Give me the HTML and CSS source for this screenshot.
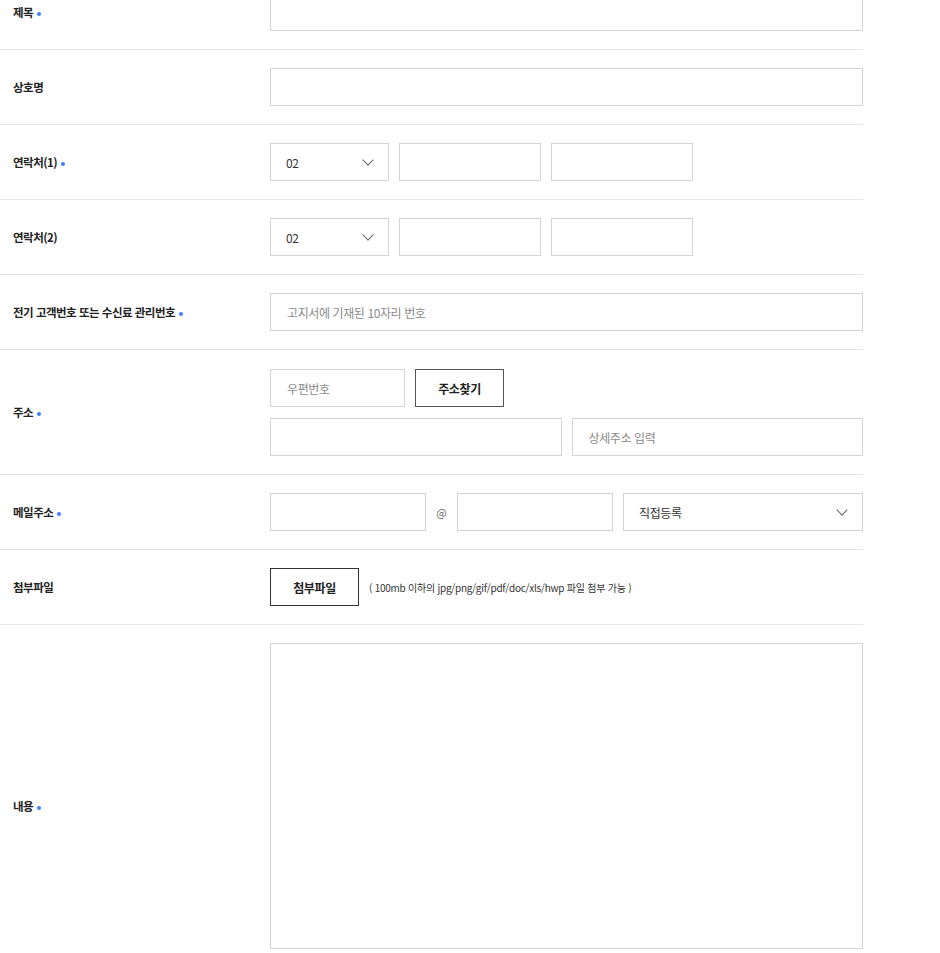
FILE: index.html
```html
<!DOCTYPE html>
<html lang="ko">
<head>
    <meta charset="UTF-8">
    <meta name="viewport" content="width=device-width, initial-scale=1.0">
    <title>문의하기</title>
    <link rel="stylesheet" href="styles.css">
</head>
<body>
    <div class="form">
        <div class="row">
            <div class="label">제목 <span class="req"></span></div>
            <div class="field"><input type="text" class="input full"></div>
        </div>
        <div class="row">
            <div class="label">상호명</div>
            <div class="field"><input type="text" class="input full"></div>
        </div>
        <div class="row">
            <div class="label">연락처(1) <span class="req"></span></div>
            <div class="field line">
                <div class="select sel-tel">02 <span class="chev"></span></div>
                <input type="text" class="input tel">
                <input type="text" class="input tel">
            </div>
        </div>
        <div class="row">
            <div class="label">연락처(2)</div>
            <div class="field line">
                <div class="select sel-tel">02 <span class="chev"></span></div>
                <input type="text" class="input tel">
                <input type="text" class="input tel">
            </div>
        </div>
        <div class="row">
            <div class="label">전기 고객번호 또는 수신료 관리번호 <span class="req"></span></div>
            <div class="field"><input type="text" class="input full" placeholder="고지서에 기재된 10자리 번호"></div>
        </div>
        <div class="row">
            <div class="label">주소 <span class="req"></span></div>
            <div class="field stack">
                <div class="line">
                    <input type="text" class="input zip" placeholder="우편번호">
                    <button class="btn">주소찾기</button>
                </div>
                <div class="line">
                    <input type="text" class="input half">
                    <input type="text" class="input half" placeholder="상세주소 입력">
                </div>
            </div>
        </div>
        <div class="row">
            <div class="label">메일주소 <span class="req"></span></div>
            <div class="field line">
                <input type="text" class="input mail">
                <span class="at">@</span>
                <input type="text" class="input mail">
                <div class="select sel-mail">직접등록 <span class="chev"></span></div>
            </div>
        </div>
        <div class="row">
            <div class="label">첨부파일</div>
            <div class="field line">
                <button class="btn dark">첨부파일</button>
                <span class="note">( 100mb 이하의 jpg/png/gif/pdf/doc/xls/hwp 파일 첨부 가능 )</span>
            </div>
        </div>
        <div class="row last">
            <div class="label">내용 <span class="req"></span></div>
            <div class="field"><textarea class="input area"></textarea></div>
        </div>
    </div>
</body>
</html>
```

FILE: styles.css
```css
body {
    margin: 0;
    background: #fff;
    font-family: "Noto Sans CJK KR", "Noto Sans", sans-serif;
    color: #222;
}
.form {
    width: 863px;
    margin-top: -25px; /* page is scrolled a bit */
}
.row {
    display: flex;
    align-items: center;
    padding: 18px 0;
    border-bottom: 1px solid #e6e6e6;
}
.row.last {
    border-bottom: 0;
}
.row.last .label {
    padding-top: 20px;
}
.label {
    width: 257px;
    padding-left: 13px;
    font-size: 11.5px;
    font-weight: 700;
    letter-spacing: -0.5px;
    color: #222;
}
.req {
    display: inline-block;
    width: 4px;
    height: 4px;
    border-radius: 50%;
    background: #3f7ff5;
    vertical-align: middle;
    margin-left: 1px;
}
.field {
    flex: 1;
}
.line {
    display: flex;
    align-items: center;
    gap: 10px;
}
.stack {
    display: flex;
    flex-direction: column;
    gap: 11px;
    padding-top: 1px;
}
.input {
    box-sizing: border-box;
    height: 38px;
    border: 1px solid #d4d4d4;
    background: #fff;
    padding: 0 16px;
    font-family: inherit;
    font-size: 12px;
    color: #333;
    outline: none;
    margin: 0;
}
.input::placeholder {
    color: #8a8a8a;
    letter-spacing: -0.4px;
}
.full {
    width: 100%;
}
.tel {
    width: 142px;
}
.zip {
    width: 135px;
}
.half {
    flex: 1;
}
.mail {
    width: 156px;
}
.area {
    width: 100%;
    height: 306px;
    display: block;
    resize: none;
}
.select {
    box-sizing: border-box;
    height: 38px;
    border: 1px solid #d4d4d4;
    display: flex;
    align-items: center;
    justify-content: space-between;
    padding: 0 16px 0 15px;
    font-size: 12px;
    color: #333;
    letter-spacing: -0.4px;
}
.sel-tel {
    width: 119px;
}
.sel-mail {
    flex: 1;
}
.chev {
    width: 7px;
    height: 7px;
    border-right: 1px solid #666;
    border-bottom: 1px solid #666;
    transform: rotate(45deg);
    margin-top: -5px;
}
.btn {
    box-sizing: border-box;
    width: 89px;
    height: 38px;
    border: 1px solid #555;
    background: #fff;
    font-family: inherit;
    font-size: 12px;
    font-weight: 700;
    letter-spacing: -0.4px;
    color: #222;
    padding: 0;
}
.btn.dark {
    border-color: #333;
}
.at {
    font-size: 11px;
    color: #666;
    width: 11px;
    text-align: center;
}
.note {
    font-size: 10px;
    letter-spacing: -0.25px;
    color: #333;
}
```
